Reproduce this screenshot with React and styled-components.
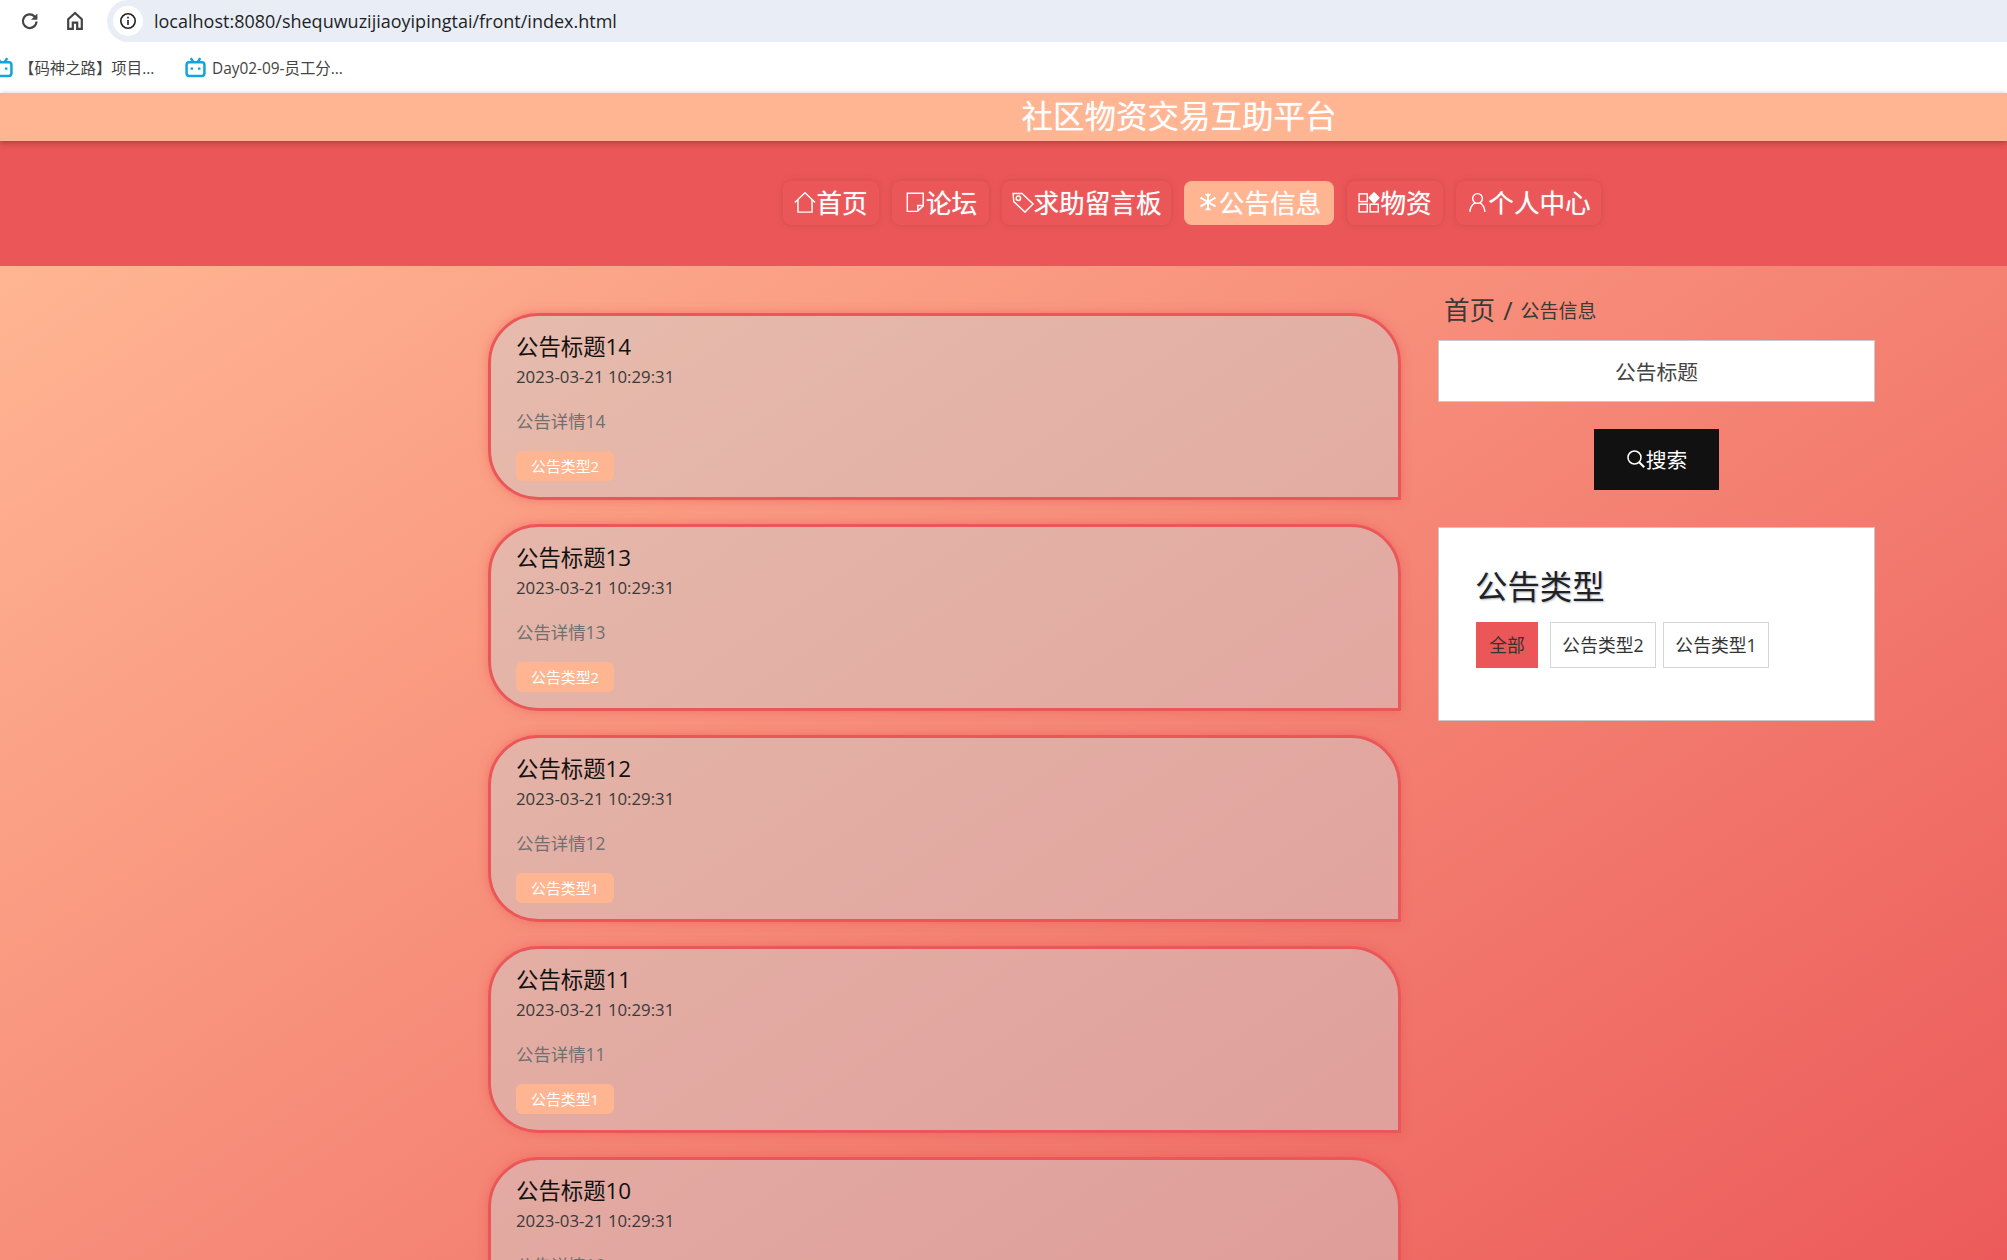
import React from "react";
import styled, { createGlobalStyle } from "styled-components";

const Global = createGlobalStyle`
  html, body { margin: 0; padding: 0; height: 1260px; overflow: hidden; background: #fff; }
  body { font-family: "Open Sans", "Noto Sans CJK SC", sans-serif; }
  * { box-sizing: border-box; }
`;

const Page = styled.div`
  width: 2007px;
  height: 1260px;
  overflow: hidden;
  display: flex;
  flex-direction: column;
`;
const AddressBar = styled.div`
  height: 42px;
  flex: none;
  display: flex;
  align-items: center;
  background: #fff;
  color: #444;
`;
const ToolIcon = styled.span`
  width: 20px;
  height: 20px;
  margin-left: ${(p) => p.$ml}px;
  display: flex;
`;
const Pill = styled.div`
  margin-left: 22px;
  flex: 1;
  height: 42px;
  display: flex;
  align-items: center;
  gap: 11px;
  padding-left: 6px;
  background: #e9eef6;
  border-radius: 21px 0 0 21px;
  font-size: 18px;
  color: #1f1f1f;
`;
const InfoDot = styled.span`
  width: 30px;
  height: 30px;
  border-radius: 50%;
  background: #fff;
  display: flex;
  align-items: center;
  justify-content: center;
`;
const Bookmarks = styled.div`
  height: 51px;
  flex: none;
  display: flex;
  align-items: center;
  background: #fff;
  font-size: 15.4px;
  color: #444;
  margin-left: -8px;
`;
const Bookmark = styled.div`
  display: flex;
  align-items: center;
  gap: 6px;
  width: ${(p) => p.$w}px;
`;
const TitleBar = styled.div`
  height: 48px;
  flex: none;
  position: relative;
  z-index: 2;
  background: #ffb592;
  box-shadow: 0 2px 6px rgba(90, 30, 30, 0.45);
  padding-left: 351px;
  text-align: center;
  font-size: 31.5px;
  line-height: 46px;
  color: #fff;
  text-shadow: 0 0 1px rgba(255, 255, 255, 0.6);
`;
const Nav = styled.nav`
  height: 125px;
  flex: none;
  background: #eb5758;
  display: flex;
  justify-content: center;
  gap: 13px;
  padding: 40px 0 0 377px;
`;
const NavItem = styled.a`
  width: ${(p) => p.$w}px;
  height: 44px;
  display: flex;
  align-items: center;
  justify-content: center;
  padding-bottom: 2px;
  border-radius: 8px;
  font-size: 25.6px;
  color: #fff;
  text-shadow: 0 0 1px rgba(255, 255, 255, 0.6);
  background: ${(p) => (p.$active ? "#ffb592" : "#eb5758")};
  box-shadow: ${(p) => (p.$active ? "none" : "0 0 6px rgba(160, 50, 50, 0.3)")};
`;
const NavIcon = styled.svg`
  width: 22px;
  height: 22px;
  flex: none;
  fill: none;
  stroke: #fff;
  stroke-width: 1.3;
`;
const Main = styled.main`
  flex: 1;
  min-height: 0;
  overflow: hidden;
  background: linear-gradient(146deg, #ffb592, #eb5758 104%);
  display: grid;
  grid-template-columns: 913px 437px;
  column-gap: 37px;
  align-items: start;
  padding: 31px 0 0 488px;
`;
const List = styled.div`
  display: flex;
  flex-direction: column;
  gap: 24px;
  margin-top: 16px;
`;
const Card = styled.article`
  height: 187px;
  flex: none;
  padding: 16px 25px;
  border: 3px solid #eb5758;
  border-radius: 50px 50px 0 50px;
  background: rgba(207, 207, 207, 0.5);
  box-shadow: 0 0 10px rgba(235, 83, 86, 0.5);
`;
const CardTitle = styled.div`
  font-size: 22.4px;
  line-height: 30px;
  color: #111;
`;
const CardDate = styled.div`
  font-size: 16.8px;
  line-height: 24px;
  margin-top: 3px;
  color: #3a3a3a;
`;
const CardDetail = styled.div`
  font-size: 17.4px;
  line-height: 24px;
  margin-top: 20px;
  color: #707070;
`;
const CardTag = styled.span`
  display: inline-block;
  height: 30px;
  margin-top: 18px;
  padding: 0 15px;
  border-radius: 6px;
  background: #ffb592;
  color: #fff;
  font-size: 14.9px;
  line-height: 30px;
`;
const Side = styled.aside`
  display: flex;
  flex-direction: column;
  align-items: stretch;
`;
const Crumb = styled.div`
  height: 27px;
  margin: 0 0 16px 6px;
  display: flex;
  align-items: flex-end;
  gap: 8px;
  font-size: 25.6px;
  line-height: 27px;
  color: #3a3a3a;
`;
const CrumbNow = styled.span`
  font-size: 19px;
  line-height: 25px;
`;
const SearchInput = styled.div`
  height: 62px;
  border: 1px solid #c9c9c9;
  background: #fff;
  display: flex;
  align-items: center;
  justify-content: center;
  font-size: 20.8px;
  color: #444;
`;
const SearchButton = styled.button`
  align-self: center;
  margin-top: 27px;
  width: 125px;
  height: 61px;
  border: 0;
  padding: 0 0 2px;
  background: #111;
  color: #fff;
  display: flex;
  align-items: center;
  justify-content: center;
  font: inherit;
  font-size: 20.8px;
`;
const TypePanel = styled.section`
  margin-top: 37px;
  height: 194px;
  border: 1px solid #c9c9c9;
  background: #fff;
  padding: 35px 36px;
`;
const TypeHeading = styled.div`
  font-size: 32.4px;
  line-height: 46px;
  color: #222;
  text-shadow: 1px 1px 2px rgba(70, 90, 130, 0.45);
`;
const TypeRow = styled.div`
  display: flex;
  margin: 13px 0 0 1px;
`;
const TypeBtn = styled.div`
  height: 46px;
  padding-bottom: 2px;
  display: flex;
  align-items: center;
  justify-content: center;
  width: ${(p) => p.$w}px;
  margin-right: ${(p) => p.$mr}px;
  border: ${(p) => (p.$active ? "0" : "1px solid #d6d6d6")};
  background: ${(p) => (p.$active ? "#eb5758" : "#fff")};
  font-size: 17.8px;
  color: #333;
`;

const navIcons = {
  home: <path d="M.8 10.5 10 1.6l9.2 8.9M3.6 8.2v11h12.8v-11" />,
  doc: <path d="M3 2h14.5v11.5l-5.2 5H3zM17.5 13.2H12.6v5" />,
  tag: (
    <>
      <path d="M1 2.2h8l10.2 9.6-7.4 7.4L1.6 9.6z" />
      <circle cx="5.8" cy="6.6" r="2" />
    </>
  ),
  snow: (
    <g strokeWidth="1.8">
      <path d="M10 2.2v15.6M3.2 6.1l13.6 7.8M16.8 6.1 3.2 13.9" />
      <path strokeWidth="1.2" d="M7.6 2.6 10 5l2.4-2.4M7.6 17.4 10 15l2.4 2.4" />
    </g>
  ),
  apps: (
    <>
      <rect x="1" y="2.6" width="7.4" height="7" />
      <rect x="1" y="12" width="7.4" height="7" />
      <rect x="11" y="12" width="7.4" height="7" />
      <path d="m14.6 1.6 4.4 4.6-4.4 4.6-4.4-4.6z" fill="#fff" />
    </>
  ),
  user: <path d="M10.5 2.4a4.4 4.4 0 1 1 0 8.8 4.4 4.4 0 0 1 0-8.8zM3.5 19c.4-4.2 2.4-7 4.8-8.2M17.2 19c-.4-4.2-2.2-7-4.6-8.2" />,
};

const navItems = [
  ["home", "首页", 96],
  ["doc", "论坛", 97],
  ["tag", "求助留言板", 169],
  ["snow", "公告信息", 150, true],
  ["apps", "物资", 96],
  ["user", "个人中心", 145],
];

const notices = [
  ["14", "公告类型2"],
  ["13", "公告类型2"],
  ["12", "公告类型1"],
  ["11", "公告类型1"],
  ["10", "公告类型1"],
];

const BiliIcon = () => (
  <svg width="21" height="21" viewBox="0 0 20 20" fill="none" stroke="#12a5dc" strokeWidth="2.4">
    <rect x="1.5" y="5" width="17" height="13" rx="2.5" />
    <path d="M5.5 1 8 5M14.5 1 12 5" />
    <path d="M6.5 10v2.2M13.5 10v2.2" />
  </svg>
);

export default function App() {
  return (
    <Page>
      <Global />
      <AddressBar>
        <ToolIcon $ml={20}>
          <svg width="20" height="20" viewBox="0 0 20 20" fill="none" stroke="#444" strokeWidth="2.2">
            <path d="M16.5 10.5a6.8 6.8 0 1 1-1.9-5L16.4 7.4" />
            <path d="M17.4 2.4v6.4H11z" fill="#444" stroke="none" />
          </svg>
        </ToolIcon>
        <ToolIcon $ml={25}>
          <svg width="20" height="20" viewBox="0 0 20 20" fill="none" stroke="#444" strokeWidth="2.2">
            <path d="M10 2 3.2 8.2v9.6h4.6v-6.2h4.4v6.2h4.6V8.2z" />
          </svg>
        </ToolIcon>
        <Pill>
          <InfoDot>
            <svg width="18" height="18" viewBox="0 0 18 18" fill="none" stroke="#222" strokeWidth="1.6">
              <circle cx="9" cy="9" r="7.2" />
              <path d="M9 8v5M9 4.8v1.8" />
            </svg>
          </InfoDot>
          <span>localhost:8080/shequwuzijiaoyipingtai/front/index.html</span>
        </Pill>
      </AddressBar>
      <Bookmarks>
        <Bookmark $w={193}>
          <BiliIcon />
          <span>【码神之路】项目...</span>
        </Bookmark>
        <Bookmark $w={200}>
          <BiliIcon />
          <span>Day02-09-员工分...</span>
        </Bookmark>
      </Bookmarks>
      <TitleBar>社区物资交易互助平台</TitleBar>
      <Nav>
        {navItems.map(([icon, label, width, active]) => (
          <NavItem key={label} $w={width} $active={active}>
            <NavIcon viewBox="0 0 20 20">{navIcons[icon]}</NavIcon>
            {label}
          </NavItem>
        ))}
      </Nav>
      <Main>
        <List>
          {notices.map(([n, type]) => (
            <Card key={n}>
              <CardTitle>公告标题{n}</CardTitle>
              <CardDate>2023-03-21 10:29:31</CardDate>
              <CardDetail>公告详情{n}</CardDetail>
              <CardTag>{type}</CardTag>
            </Card>
          ))}
        </List>
        <Side>
          <Crumb>
            <span>首页</span>
            <span>/</span>
            <CrumbNow>公告信息</CrumbNow>
          </Crumb>
          <SearchInput>公告标题</SearchInput>
          <SearchButton>
            <svg width="20" height="20" viewBox="0 0 20 20" fill="none" stroke="#fff" strokeWidth="1.5">
              <circle cx="8.5" cy="8.5" r="6.5" />
              <path d="m13.2 13.2 5 5" strokeWidth="2.2" />
            </svg>
            搜索
          </SearchButton>
          <TypePanel>
            <TypeHeading>公告类型</TypeHeading>
            <TypeRow>
              <TypeBtn $active $w={62} $mr={12}>全部</TypeBtn>
              <TypeBtn $w={106} $mr={7}>公告类型2</TypeBtn>
              <TypeBtn $w={106} $mr={0}>公告类型1</TypeBtn>
            </TypeRow>
          </TypePanel>
        </Side>
      </Main>
    </Page>
  );
}
